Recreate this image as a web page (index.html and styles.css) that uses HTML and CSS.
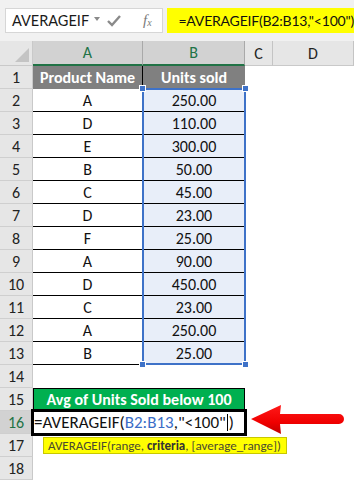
FILE: index.html
```html
<!DOCTYPE html>
<html lang="en">
<head>
    <meta charset="UTF-8">
    <title>AVERAGEIF</title>
    <link rel="stylesheet" href="styles.css">
</head>
<body>
    <div class="sheet">
        <div class="topbar">
            <div class="namebox">
                <span class="name">AVERAGEIF</span>
                <span class="drop"></span>
                <svg class="check" width="14" height="12" viewBox="0 0 14 12"><path d="M1 6 L5 10 L13 1" fill="none" stroke="#8a8a8a" stroke-width="2.4"/></svg>
                <span class="fx">f<sub>x</sub></span>
            </div>
            <div class="formula">=AVERAGEIF(B2:B13,"&lt;100")</div>
        </div>

        <div class="grid">
            <!-- column headers -->
            <div class="corner"><span class="tri"></span></div>
            <div class="colhdr on">A</div>
            <div class="colhdr on">B</div>
            <div class="colhdr">C</div>
            <div class="colhdr">D</div>

            <div class="rowhdr">1</div>
            <div class="cell head a">Product Name</div>
            <div class="cell head b">Units sold</div>
            <div class="cell"></div><div class="cell"></div>

            <div class="rowhdr">2</div><div class="cell a line">A</div><div class="cell b line sel">250.00</div><div class="cell"></div><div class="cell"></div>
            <div class="rowhdr">3</div><div class="cell a line">D</div><div class="cell b line sel">110.00</div><div class="cell"></div><div class="cell"></div>
            <div class="rowhdr">4</div><div class="cell a line">E</div><div class="cell b line sel">300.00</div><div class="cell"></div><div class="cell"></div>
            <div class="rowhdr">5</div><div class="cell a line">B</div><div class="cell b line sel">50.00</div><div class="cell"></div><div class="cell"></div>
            <div class="rowhdr">6</div><div class="cell a line">C</div><div class="cell b line sel">45.00</div><div class="cell"></div><div class="cell"></div>
            <div class="rowhdr">7</div><div class="cell a line">D</div><div class="cell b line sel">23.00</div><div class="cell"></div><div class="cell"></div>
            <div class="rowhdr">8</div><div class="cell a line">F</div><div class="cell b line sel">25.00</div><div class="cell"></div><div class="cell"></div>
            <div class="rowhdr">9</div><div class="cell a line">A</div><div class="cell b line sel">90.00</div><div class="cell"></div><div class="cell"></div>
            <div class="rowhdr">10</div><div class="cell a line">D</div><div class="cell b line sel">450.00</div><div class="cell"></div><div class="cell"></div>
            <div class="rowhdr">11</div><div class="cell a line">C</div><div class="cell b line sel">23.00</div><div class="cell"></div><div class="cell"></div>
            <div class="rowhdr">12</div><div class="cell a line">A</div><div class="cell b line sel">250.00</div><div class="cell"></div><div class="cell"></div>
            <div class="rowhdr">13</div><div class="cell a line">B</div><div class="cell b line sel">25.00</div><div class="cell"></div><div class="cell"></div>

            <div class="rowhdr">14</div><div class="cell"></div><div class="cell"></div><div class="cell"></div><div class="cell"></div>
            <div class="rowhdr">15</div>
            <div class="cell avg">Avg of Units Sold below 100</div>
            <div class="cell"></div><div class="cell"></div>
            <div class="rowhdr on">16</div>
            <div class="cell edit">=AVERAGEIF(<span class="ref">B2:B13</span>,"&lt;100"<span class="caret"></span>)</div>
            <div class="cell"></div><div class="cell"></div>
            <div class="rowhdr">17</div><div class="cell"></div><div class="cell"></div><div class="cell"></div><div class="cell"></div>
            <div class="rowhdr">18</div><div class="cell"></div><div class="cell"></div><div class="cell"></div><div class="cell"></div>

            <!-- selection of B2:B13 -->
            <div class="selbox">
                <span class="handle tl"></span>
                <span class="handle tr"></span>
                <span class="handle bl"></span>
                <span class="handle br"></span>
            </div>

            <div class="tip">AVERAGEIF(range, <b>criteria</b>, [average_range])</div>

            <svg class="arrow" width="96" height="32" viewBox="0 0 96 32">
                <defs>
                    <linearGradient id="red" x1="0" y1="0" x2="0" y2="1">
                        <stop offset="0" stop-color="#ff1a1a"/>
                        <stop offset="0.6" stop-color="#f00000"/>
                        <stop offset="1" stop-color="#c00000"/>
                    </linearGradient>
                </defs>
                <path d="M1 15 L31 1 L30 10 L89 10 A5 5 0 0 1 89 20 L30 20 L31 30 Z" fill="url(#red)"/>
            </svg>
        </div>
    </div>
</body>
</html>
```

FILE: styles.css
```css
body {
    margin: 0;
    background: #ffffff;
    font-family: Calibri, Carlito, Lato, "Liberation Sans", sans-serif;
}
.sheet {
    width: 354px;
    height: 484px;
    overflow: hidden;
    background: #ffffff;
}
.topbar {
    height: 41px;
    background: #f1f1f1;
    display: flex;
    align-items: flex-start;
    padding-top: 8px;
    box-sizing: border-box;
    gap: 4px;
}
.namebox {
    margin-left: 5px;
    width: 161px;
    height: 25px;
    background: #ffffff;
    border: 1px solid #d6d6d6;
    box-sizing: border-box;
    display: flex;
    align-items: center;
    position: relative;
}
.name {
    font-family: Lato, "Liberation Sans", sans-serif;
    font-size: 14.5px;
    margin-left: 6px;
    color: #1a1a1a;
    width: 78px;
}
.drop {
    width: 0;
    height: 0;
    border-left: 3px solid transparent;
    border-right: 3px solid transparent;
    border-top: 4px solid #8a8a8a;
    margin-left: 4px;
    margin-top: -3px;
}
.check {
    margin-left: 7px;
}
.fx {
    font-family: "Liberation Serif", serif;
    font-style: italic;
    font-size: 15px;
    color: #7a7a7a;
    margin-left: 22px;
}
.fx sub {
    font-size: 10px;
    vertical-align: -1px;
}
.formula {
    flex: 1;
    height: 25px;
    background: #ffff00;
    font-family: Lato, "Liberation Sans", sans-serif;
    font-size: 14px;
    letter-spacing: -0.2px;
    line-height: 25px;
    padding-left: 11px;
    white-space: nowrap;
    color: #111;
}
.grid {
    display: grid;
    grid-template-columns: 33px 110px 102px 28px 1fr;
    grid-template-rows: 25px;
    grid-auto-rows: 23px;
    position: relative;
}
.corner {
    background: #e6e6e6;
    border-right: 1px solid #c9c9c9;
    border-bottom: 1px solid #c9c9c9;
    position: relative;
}
.tri {
    position: absolute;
    right: 3px;
    bottom: 3px;
    width: 0;
    height: 0;
    border-left: 14px solid transparent;
    border-bottom: 14px solid #c4c4c4;
}
.colhdr {
    background: #e6e6e6;
    border-right: 1px solid #c4c4c4;
    border-bottom: 1px solid #c9c9c9;
    display: flex;
    align-items: center;
    justify-content: center;
    font-size: 16px;
    color: #222;
}
.colhdr.on {
    background: #d2d2d2;
    color: #217346;
    border-bottom: 2px solid #217346;
    border-right-color: #a9a9a9;
}
.rowhdr {
    background: #e6e6e6;
    border-right: 1px solid #c9c9c9;
    border-bottom: 1px solid #cfcfcf;
    display: flex;
    align-items: center;
    justify-content: center;
    font-size: 16px;
    color: #222;
}
.rowhdr.on {
    background: #d2d2d2;
    color: #217346;
}
.cell {
    display: flex;
    align-items: center;
    justify-content: center;
    font-size: 16px;
    color: #111;
    white-space: nowrap;
    box-sizing: border-box;
}
.cell.a {
    border-right: 1px solid #000000;
}
.cell.line {
    border-bottom: 1px solid #000000;
}
.cell.sel {
    background: #e8eef9;
}
.cell.head {
    background: #808080;
    color: #ffffff;
    font-weight: bold;
}
.avg {
    grid-column: span 2;
    background: #00b050;
    color: #ffffff;
    font-weight: bold;
    border: 1px solid #000000;
}
.edit {
    grid-column: span 2;
    justify-content: flex-start;
    font-size: 17px;
    padding-left: 1px;
    outline: 3px solid #000000;
    outline-offset: -1px;
    position: relative;
    z-index: 2;
    background: #ffffff;
}
.ref {
    color: #3a6dc6;
}
.caret {
    display: inline-block;
    width: 1px;
    height: 17px;
    background: #000;
    margin: 0 1px;
}
.selbox {
    position: absolute;
    left: 142px;
    top: 47px;
    width: 104px;
    height: 277px;
    border: 2px solid #3e72c8;
    box-sizing: border-box;
}
.handle {
    position: absolute;
    width: 5px;
    height: 5px;
    background: #3e72c8;
    border: 1px solid #ffffff;
}
.handle.tl { left: -5px; top: -5px; }
.handle.tr { right: -5px; top: -5px; }
.handle.bl { left: -5px; bottom: -5px; }
.handle.br { right: -5px; bottom: -5px; }
.tip {
    position: absolute;
    left: 43px;
    top: 396px;
    width: 244px;
    height: 17px;
    box-sizing: border-box;
    background: #ffff00;
    border: 1px solid #c8c800;
    font-family: Calibri, Carlito, Lato, "Liberation Sans", sans-serif;
    font-size: 13px;
    color: #4a4a30;
    padding-left: 4px;
    line-height: 15px;
    white-space: nowrap;
    z-index: 3;
}
.tip b {
    color: #333;
}
.arrow {
    position: absolute;
    left: 250px;
    top: 363px;
}
```
